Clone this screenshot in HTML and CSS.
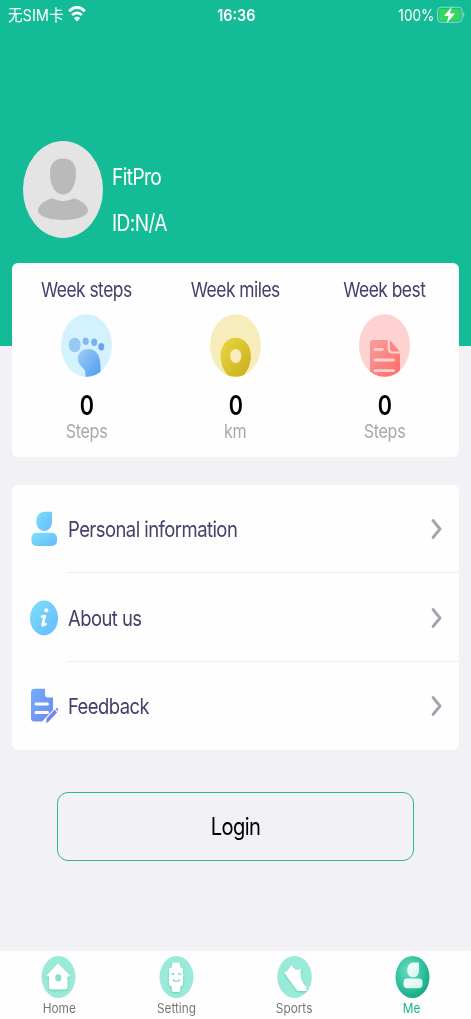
FILE: index.html
```html
<!DOCTYPE html>
<html lang="en">
<head>
<meta charset="utf-8">
<title>FitPro</title>
<link rel="stylesheet" href="styles.css">
</head>
<body>
<div class="app">
  <header class="hero">
    <div class="status">
      <div class="status-left">
        <span class="carrier">无SIM卡</span>
        <svg class="wifi" viewBox="0 0 18 16" width="18" height="16"><g fill="none" stroke="#fff" stroke-width="2.800"><path d="M1.200 5.400C5.700.2 12.300.2 16.800 5.400"/><path d="M4.200 9.200C6.900 6.100 11.100 6.100 13.800 9.200"/></g><path fill="#fff" d="M9 15.600 5.900 12.200C7.600 10.300 10.400 10.300 12.100 12.200Z"/></svg>
      </div>
      <span class="time">16:36</span>
      <div class="status-right">
        <span class="percent">100%</span>
        <svg class="battery" viewBox="0 0 28 18" width="28" height="18"><rect x=".6" y="1.200" width="24.500" height="15" rx="3.500" fill="none" stroke="#8ce0c8"/><rect x="2.200" y="2.900" width="21.300" height="11.600" rx="2" fill="#36d75c"/><path d="M26.200 6q2.400 2.700 0 5.400z" fill="#8ce0c8"/><path d="M14.800.8 7 9.900h4.600l-1.900 7.400 8.300-9.700h-5z" fill="#fff"/></svg>
      </div>
    </div>
    <div class="profile">
      <svg class="avatar" viewBox="0 0 80 97" width="80" height="97"><ellipse cx="40" cy="48.500" rx="40" ry="48.500" fill="#e4e4e4"/><path d="M40 17.500c8.600 0 13 5.500 13 14.500 0 12-4.500 21.500-13 21.500S27 44 27 32c0-9 4.400-14.500 13-14.500z" fill="#bababa"/><path d="M29.500 57.300c6 3.600 15 3.600 21 0C58 59 65 64.500 65 69.500c0 6-12 9.500-25 9.500s-25-3.500-25-9.500c0-5 7-10.500 14.500-12.200z" fill="#bababa"/></svg>
      <div class="identity"><span class="name">FitPro</span><span class="uid">ID:N/A</span></div>
    </div>
  </header>

  <main class="content">
    <section class="card stats">
      <div class="stat">
        <span class="stat-title">Week steps</span>
        <svg viewBox="0 0 51 63" width="51" height="63"><defs><linearGradient id="foot" x1="0" y1="0" x2="1" y2="1"><stop stop-color="#a0cdf7"/><stop offset="1" stop-color="#4c9aee"/></linearGradient><clipPath id="disc"><ellipse cx="25.500" cy="31.500" rx="25.500" ry="31.300"/></clipPath></defs><ellipse cx="25.500" cy="31.500" rx="25.500" ry="31.300" fill="#d3f2fd"/><g clip-path="url(#disc)"><ellipse cx="13.700" cy="31" rx="6" ry="7.300" fill="#98c8f6"/><ellipse cx="24.700" cy="27.300" rx="3" ry="3.700" fill="#82b8f2"/><ellipse cx="33.200" cy="28.300" rx="3" ry="3.700" fill="#78b0f0"/><ellipse cx="40.300" cy="32.800" rx="3" ry="3.700" fill="#68a7ef"/><path d="M27.500 35c7.500 0 12 6.500 12 17v10L24 64c1-6 .5-7.500-2.500-10.500C18 50.500 16.800 48 16.800 45c0-6 4.700-10 10.700-10z" fill="url(#foot)"/></g></svg>
        <span class="value">0</span><span class="unit">Steps</span>
      </div>
      <div class="stat">
        <span class="stat-title">Week miles</span>
        <svg viewBox="0 0 51 63" width="51" height="63"><defs><linearGradient id="pin" x1="0" y1="0" x2="1" y2="1"><stop stop-color="#ead841"/><stop offset="1" stop-color="#c8ad1c"/></linearGradient></defs><ellipse cx="25.500" cy="31.500" rx="25.500" ry="31.300" fill="#f7edba"/><g clip-path="url(#disc)"><path fill-rule="evenodd" d="M25.700 23.800c8.700 0 15.200 7.800 15.200 18.200 0 8-3.500 16-9.500 22H20c-6-6-9.500-14-9.500-22 0-10.400 6.500-18.200 15.200-18.200zm0 11.200a5.700 7 0 1 0 0 14 5.700 7 0 1 0 0-14z" fill="url(#pin)"/></g></svg>
        <span class="value">0</span><span class="unit">km</span>
      </div>
      <div class="stat">
        <span class="stat-title">Week best</span>
        <svg viewBox="0 0 51 63" width="51" height="63"><defs><linearGradient id="doc" x1="0" y1="0" x2=".8" y2="1"><stop stop-color="#f5a09d"/><stop offset="1" stop-color="#ff6e6c"/></linearGradient></defs><ellipse cx="25.500" cy="31.500" rx="25.500" ry="31.300" fill="#fed2d1"/><g clip-path="url(#disc)"><path d="M13.500 26h15.200v8.500c0 3.500 1.600 5 4.400 5h7.900V64H11V29c0-2 1-3 2.500-3z" fill="url(#doc)"/><path d="M31 26.200 40.600 37.500H34c-2 0-3-1-3-3.300z" fill="#fa8583"/><path d="M16 35.300h7.500M16 46h18.500M16 56.700h18.500" stroke="#fed2d1" stroke-width="2.800" stroke-linecap="round"/></g></svg>
        <span class="value">0</span><span class="unit">Steps</span>
      </div>
    </section>

    <nav class="card menu">
      <a class="row">
        <svg viewBox="0 0 30 36" width="30" height="36"><defs><linearGradient id="sky" x1="0" y1="0" x2="1" y2="1"><stop stop-color="#7edff8"/><stop offset="1" stop-color="#64baff"/></linearGradient></defs><path d="M14.500.8H22v9.700c0 5.500-3.300 9.500-7.800 9.500S6.300 16 6.300 10.500 9.500.8 14.500.8z" fill="url(#sky)"/><rect x="1.500" y="21.700" width="25.500" height="13.300" rx="5" fill="url(#sky)"/></svg>
        <span class="label">Personal information</span>
        <svg class="chevron" viewBox="0 0 12 22" width="12" height="22"><path d="M2 2.500l7 8.500-7 8.500"/></svg>
      </a>
      <a class="row">
        <svg viewBox="0 0 30 36" width="30" height="36"><ellipse cx="14" cy="18" rx="14" ry="17.500" fill="url(#sky)"/><circle cx="16.200" cy="10.200" r="2" fill="#fff"/><path d="M12 16.600 14.800 16l-2.200 8.500q-.2 1.700 2.900-.5" fill="none" stroke="#fff" stroke-width="2.600" stroke-linecap="round" stroke-linejoin="round"/></svg>
        <span class="label">About us</span>
        <svg class="chevron" viewBox="0 0 12 22" width="12" height="22"><path d="M2 2.500l7 8.500-7 8.500"/></svg>
      </a>
      <a class="row">
        <svg viewBox="0 0 30 36" width="30" height="36"><defs><linearGradient id="note" x1="0" y1="0" x2="1" y2="1"><stop stop-color="#72adfc"/><stop offset="1" stop-color="#7187ed"/></linearGradient></defs><path d="M4 .8h11v5.700c0 2 1 3 3 3h5v12.500l-10 10.500q-.5.500-1 1H4c-2 0-3-1.500-3-3.500V4.500C1 2.300 2 .8 4 .8z" fill="url(#note)"/><path d="M6 16h11.500M6 24.500h11.500" stroke="#fff" stroke-width="3" stroke-linecap="round"/><path d="M16 35.500l.8-5.200 8-8.800 2.200 3-8 8.800zM25.700 20.700l1-.9q1.800.8 1.500 2.600l-.8.900z" fill="#7186eb"/></svg>
        <span class="label">Feedback</span>
        <svg class="chevron" viewBox="0 0 12 22" width="12" height="22"><path d="M2 2.500l7 8.500-7 8.500"/></svg>
      </a>
    </nav>

    <button class="login"><span>Login</span></button>
  </main>

  <footer class="tabs">
    <a class="tab"><svg viewBox="0 0 35 42" width="35" height="42"><ellipse cx="17.500" cy="21" rx="17" ry="21" fill="#9aead9"/><path class="shade" d="M17 7.200 29 19.500q.5 1-.8 1h-1.700V31q0 2.500-2.500 2.500H10.500Q8 33.500 8 31V20.500H6.300q-1.200 0-.8-1z"/><rect x="14.300" y="18.200" width="6" height="7" rx="2.800" fill="#8be0cd"/></svg><span>Home</span></a>
    <a class="tab"><svg viewBox="0 0 35 42" width="35" height="42"><ellipse cx="17.500" cy="21" rx="17" ry="21" fill="#9aead9"/><path class="shade" d="M13.500 6.500h7.300l.8 5 2.400 1v6l1 1-1 1V29l-2.400 1.500-.9 5.500h-7.200l-.9-5.500L10 29V12.500l2.600-1z"/><path d="M12.500 18.500q1.500-1.500 3 0m3.500 0q1.500-1.500 3 0M13.800 23.500q3.600 4 7.400 0" fill="none" stroke="#7fdcc8" stroke-width="1.200"/></svg><span>Setting</span></a>
    <a class="tab"><svg viewBox="0 0 35 42" width="35" height="42"><ellipse cx="17.500" cy="21" rx="17.300" ry="21" fill="#9aead9"/><path class="shade" d="M7 16.500q2.300-.5 4-2.500l3.500-5.200q2.500 5 6 5.200l3-1.200.5 9.500 2.500 5.500 3 3v4.200h-7.800q-1 0-2-1z"/></svg><span>Sports</span></a>
    <a class="tab active"><svg viewBox="0 0 35 42" width="35" height="42"><defs><radialGradient id="me" cx=".4" cy=".35" r=".7"><stop stop-color="#69dfc2"/><stop offset=".5" stop-color="#3bc5a4"/><stop offset="1" stop-color="#13a781"/></radialGradient><linearGradient id="mint" x2="1" y2="1"><stop stop-color="#fff"/><stop offset="1" stop-color="#ccf5eb"/></linearGradient></defs><ellipse cx="17.500" cy="21" rx="17" ry="21" fill="url(#me)"/><path d="M18.500 6.500H24v7.800c0 4.500-2.300 7-5.700 7s-6-2.500-6-7 2.500-7.800 6.200-7.800z" fill="url(#mint)"/><rect x="8.500" y="22.500" width="19" height="9.800" rx="4" fill="url(#mint)"/></svg><span>Me</span></a>
  </footer>
</div>
</body>
</html>
```
FILE: styles.css
```css
* { box-sizing: border-box; }
body { margin: 0; font-family: Inter, Roboto, "Noto Sans CJK SC", sans-serif; }
svg { display: block; flex: none; }
span { display: inline-block; white-space: nowrap; }

.app { height: 1019px; display: flex; flex-direction: column; background: #f1f1f6; overflow: hidden; }

.hero { height: 346px; flex: none; background: #14bb97; color: #fff; }
.status { height: 30px; padding: 0 6px 0 8px; display: grid; grid-template-columns: 1fr auto 1fr; align-items: center; font-size: 16px; line-height: 20px; }
.status-left { display: flex; align-items: center; }
.carrier { width: 60px; transform: scaleX(.91); transform-origin: left; }
.wifi { margin-top: -3px; }
.time { font-weight: 600; transform: scaleX(.9); }
.status-right { display: flex; align-items: center; justify-content: flex-end; gap: 3px; }
.percent { transform: scaleX(.85); transform-origin: right; }
.battery { margin-top: -1px; }

.profile { display: flex; gap: 9px; padding: 111px 0 0 23px; }
.identity { display: flex; flex-direction: column; padding-top: 22px; gap: 18px; font-size: 23px; line-height: 28px; align-items: flex-start; letter-spacing: -.03em; }
.name, .uid { transform: scaleX(.83); transform-origin: left; }

.content { flex: 1; padding: 0 12px; margin-top: -83px; display: flex; flex-direction: column; }
.card { background: #fefefe; border-radius: 6px; flex: none; }
.stats { height: 194px; display: grid; grid-template-columns: repeat(3, 1fr); }
.stat { display: flex; flex-direction: column; align-items: center; }
.stat-title { margin-top: 14px; font-size: 20.5px; line-height: 26px; margin-bottom: 11px; color: #42426a; letter-spacing: -.03em; transform: scaleX(.85); }
.value { margin-top: 14px; font-size: 27px; line-height: 30px; font-weight: 600; color: #000; transform: scaleX(.8); }
.unit { font-size: 19px; line-height: 22px; color: #a9a9a9; letter-spacing: -.02em; transform: scaleX(.85); }

.menu { height: 265px; margin-top: 28px; display: grid; grid-template-rows: 88px 89px 88px; }
.row { display: flex; align-items: center; padding: 0 16px 0 18px; background: linear-gradient(#efeff2, #efeff2) right bottom / 392px 1px no-repeat; }
.row:last-child { background: none; }
.label { flex: 1; margin-left: 8px; font-size: 22px; line-height: 28px; color: #42426a; letter-spacing: -.03em; transform: scaleX(.84); transform-origin: left; }
.chevron { fill: none; stroke: #a3a3b0; stroke-width: 2.8; stroke-linecap: round; stroke-linejoin: round; }

.login { width: 357px; height: 69px; flex: none; margin: 42px auto 0; border: 1px solid #30b58f; border-radius: 11px; background: transparent; color: #000; font: 24px/30px Inter, sans-serif; letter-spacing: -.03em; padding: 0; }
.login span { transform: scaleX(.84); }

.tabs { height: 68px; flex: none; background: #fefefe; display: grid; grid-template-columns: repeat(4, 1fr); }
.tab { display: flex; flex-direction: column; align-items: center; padding-top: 5px; color: #777; font-size: 13px; line-height: 16px; }
.tab span { margin-top: 2px; transform: scaleX(.91); }
.tab.active { color: #1bb38e; }
.shade { fill: #fff; filter: drop-shadow(0 1px 1px #63cdb4); }
```
